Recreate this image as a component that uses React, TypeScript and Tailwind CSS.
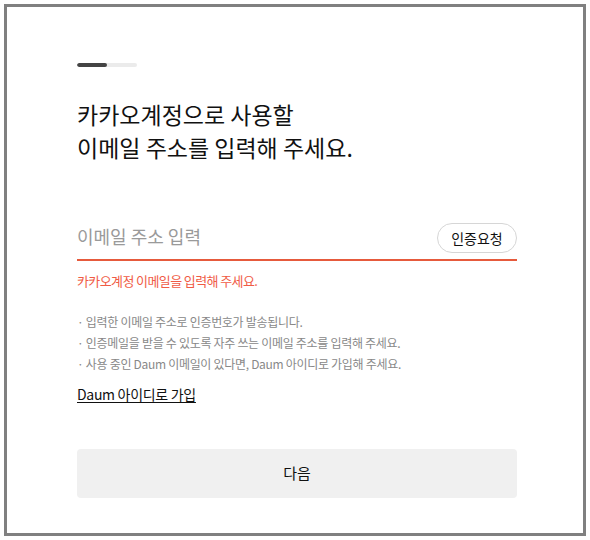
import React from "react";

export default function App() {
  const font = { fontFamily: '"Noto Sans CJK KR", "Noto Sans", sans-serif' };
  return (
    <div className="w-[590px] h-[540px] bg-white p-[4px]" style={font}>
      <div className="w-[582px] h-[532px] border-[3px] border-[#808080] bg-white pl-[70px] pt-[56px]">
        <div className="w-[440px]">
          <div className="flex w-[60px] h-[4px] rounded-full bg-[#ebebeb] overflow-hidden">
            <div className="w-[30px] h-full rounded-full bg-[#444444]" />
          </div>
          <h1 className="mt-[31px] text-[23px] leading-[33px] font-normal text-[#111111]">
            카카오계정으로 사용할
            <br />
            이메일 주소를 입력해 주세요.
          </h1>
          <div className="mt-[59px] flex items-center h-[30px] border-b-2 border-[#e65a3c] pb-[6px] box-content">
            <span className="flex-1 pb-[4px] text-[18px] leading-[26px] text-[#9a9a9a]">이메일 주소 입력</span>
            <button className="h-[30px] w-[80px] rounded-full border border-[#d6d6d6] text-[14px] text-[#111111] bg-white">
              인증요청
            </button>
          </div>
          <p className="mt-[10px] text-[13px] leading-[20px] text-[#f05b45] tracking-[-0.6px]">
            카카오계정 이메일을 입력해 주세요.
          </p>
          <ul className="mt-[20px] text-[12px] leading-[21px] text-[#888888] tracking-[-0.3px]">
            <li>· 입력한 이메일 주소로 인증번호가 발송됩니다.</li>
            <li>· 인증메일을 받을 수 있도록 자주 쓰는 이메일 주소를 입력해 주세요.</li>
            <li>· 사용 중인 Daum 이메일이 있다면, Daum 아이디로 가입해 주세요.</li>
          </ul>
          <a className="block w-fit mt-[10px] text-[14px] leading-[20px] text-[#111111] underline underline-offset-2 tracking-[-0.3px]">
            Daum 아이디로 가입
          </a>
          <button className="block mt-[45px] w-[440px] h-[49px] rounded-[4px] bg-[#f0f0f0] text-[15px] text-[#111111]">
            다음
          </button>
        </div>
      </div>
    </div>
  );
}
